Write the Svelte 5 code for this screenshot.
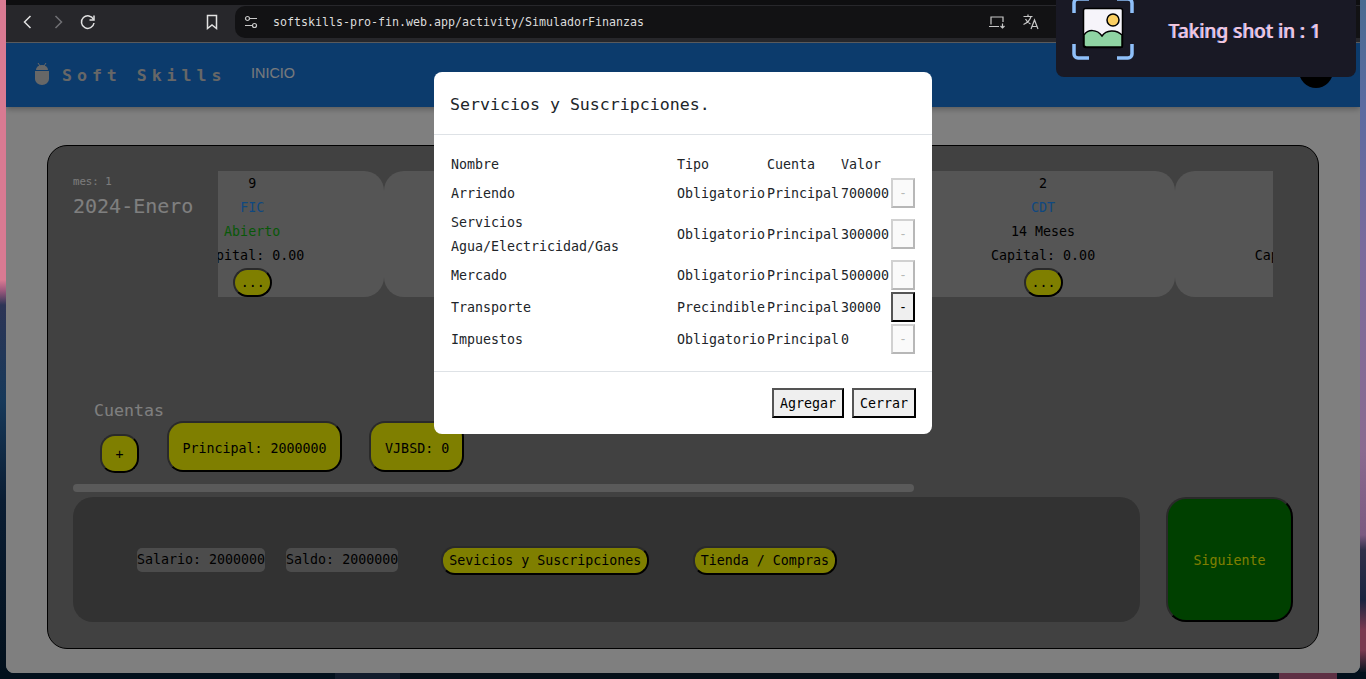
<script>
  // the two middle cards sit behind the dialog, the last one is cut by the strip
  const cards = [
    { num: 9, type: "FIC", term: "Abierto", open: true, capital: "Capital: 0.00" },
    {},
    {},
    { num: 2, type: "CDT", term: "14 Meses", capital: "Capital: 0.00" },
    { capital: "Capital: 0.00" },
  ];

  const services = [
    { name: "Arriendo", kind: "Obligatorio", value: 700000, locked: true },
    { name: "Servicios Agua/Electricidad/Gas", kind: "Obligatorio", value: 300000, locked: true },
    { name: "Mercado", kind: "Obligatorio", value: 500000, locked: true },
    { name: "Transporte", kind: "Precindible", value: 30000, locked: false },
    { name: "Impuestos", kind: "Obligatorio", value: 0, locked: true },
  ];
</script>

<div class="desktop">
  <div class="window">
    <div class="toolbar">
      <svg class="tool" viewBox="0 0 20 20" width="20" height="20"><path d="M12.5 4 6.5 10l6 6" /></svg>
      <svg class="tool off" viewBox="0 0 20 20" width="20" height="20"><path d="M7.5 4l6 6-6 6" /></svg>
      <svg class="tool" viewBox="0 0 20 20" width="20" height="20"><path d="M15.5 7.5A6.3 6.3 0 1 0 16 11" /><path d="M16 3.5v4.5h-4.5" /></svg>
      <svg class="tool mark" viewBox="0 0 20 20" width="20" height="20"><path d="M5.5 3.5h9v13L10 13l-4.500 3.500z" /></svg>
      <div class="address">
        <svg class="tool small" viewBox="0 0 16 16" width="16" height="16">
          <circle cx="4.500" cy="4.500" r="2" /><path d="M7 4.500h7M2 11.500h7" /><circle cx="11.500" cy="11.500" r="2" />
        </svg>
        <span class="url">softskills-pro-fin.web.app/activity/SimuladorFinanzas</span>
        <svg class="tool small laptop" viewBox="0 0 18 16" width="18" height="16">
          <path d="M3 10.500V3h12v5M1 12.500h10M14.500 9.500v4.500M12.500 12l2 2 2-2" />
        </svg>
        <svg class="tool small lang" viewBox="0 0 18 18" width="18" height="18">
          <path d="M1.500 3.500h9M6 1.500v2M9 3.500C8 7 5 10 1.500 11.500M3.500 6c1 2 3 4 5 5M9 16l3.500-9 3.500 9M10 13.500h5" />
        </svg>
      </div>
    </div>

    <div class="page">
      <header class="nav">
        <svg class="bot" viewBox="0 0 14 22" width="14" height="22">
          <path d="M3 0l2 3M11 0L9 3" class="antenna" />
          <path d="M1 7a6 5 0 0 1 12 0z" />
          <path d="M0 8h14v8a7 6 0 0 1-14 0z" />
        </svg>
        <span class="brand">Soft Skills</span>
        <span class="link">INICIO</span>
        <span class="avatar"></span>
      </header>

      <main class="panel">
        <section class="top">
          <div class="date">
            <small>mes: 1</small>
            <h2>2024-Enero</h2>
          </div>
          <div class="strip">
            <div class="track">
              {#each cards as card}
                <div class="card">
                  <span>{card.num ?? ""}</span>
                  <span class="type">{card.type ?? ""}</span>
                  <span class:open={card.open}>{card.term ?? ""}</span>
                  <span>{card.capital ?? ""}</span>
                  <button class="olive more">...</button>
                </div>
              {/each}
            </div>
          </div>
        </section>

        <section class="accounts">
          <h3>Cuentas</h3>
          <div class="account-row">
            <button class="olive add">+</button>
            <button class="olive account">Principal: 2000000</button>
            <button class="olive account">VJBSD: 0</button>
          </div>
          <div class="thumb"></div>
        </section>

        <section class="bottom">
          <div class="summary">
            <span class="chip">Salario: 2000000</span>
            <span class="chip">Saldo: 2000000</span>
            <button class="olive action first">Sevicios y Suscripciones</button>
            <button class="olive action">Tienda / Compras</button>
          </div>
          <button class="next">Siguiente</button>
        </section>
      </main>

      <div class="backdrop"></div>
    </div>
  </div>

  <div class="dialog">
    <h1>Servicios y Suscripciones.</h1>
    <div class="dialog-body">
      <table>
        <colgroup>
          <col class="c-name" /><col class="c-kind" /><col class="c-account" /><col class="c-value" /><col class="c-action" />
        </colgroup>
        <thead>
          <tr><th>Nombre</th><th>Tipo</th><th>Cuenta</th><th>Valor</th><th></th></tr>
        </thead>
        <tbody>
          {#each services as s}
            <tr>
              <td>{s.name}</td>
              <td>{s.kind}</td>
              <td>Principal</td>
              <td>{s.value}</td>
              <td><button class="remove" disabled={s.locked}>-</button></td>
            </tr>
          {/each}
        </tbody>
      </table>
    </div>
    <div class="dialog-foot">
      <button class="plain">Agregar</button>
      <button class="plain">Cerrar</button>
    </div>
  </div>

  <div class="toast">
    <svg viewBox="0 0 62 62" width="62" height="62">
      <g class="corners">
        <path d="M2 15V5a4 4 0 0 1 4-4h11" />
        <path d="M45 1h11a4 4 0 0 1 4 4v10" />
        <path d="M2 46v10a4 4 0 0 0 4 4h11" />
        <path d="M45 60h11a4 4 0 0 0 4-4V46" />
      </g>
      <rect x="11.500" y="10.500" width="39" height="39" rx="2" fill="#f6f4fa" stroke="#000" stroke-width="1.500" />
      <circle cx="41" cy="22" r="6" fill="#fbcf62" stroke="#000" stroke-width="1.500" />
      <path d="M12 48V37c4-6 13-6 18 1 4-6 14-7 20-1v12H14z" fill="#8fd4a3" stroke="#000" stroke-width="1.500" />
    </svg>
    <span>Taking shot in : 1</span>
  </div>
</div>

<style>
  :global(body) {
    margin: 0;
  }

  .desktop {
    position: relative;
    height: 679px;
    overflow: hidden;
    font-family: "DejaVu Sans Mono", monospace;
    font-size: 13.3px;
    background:
      linear-gradient(90deg, #02101c 0 335px, #121c2c 335px 400px, #061019 400px 1279px, #5e3044 1279px 1337px, #02101c 1337px) 0 672px / 100% 7px no-repeat,
      linear-gradient(180deg, #d97a92 0 280px, #a05a7e 290px, #2d3556 305px, #17395a 400px, #0a1d33 500px, #02101c 679px) 0 0 / 6px 100% no-repeat,
      linear-gradient(180deg, #4a6a90 0, #5a6aa0 100px, #7a6a9c 250px, #8a6a90 450px, #7a5a80 535px, #30304a 550px, #1a2440 600px, #7a3a50 630px, #7a3a50 650px, #0a1420 672px) 100% 0 / 6px 100% no-repeat,
      #02101c;
  }

  .window {
    display: flex;
    flex-direction: column;
    height: 672.5px;
    margin: 0 6px;
  }

  .toolbar {
    display: flex;
    flex: none;
    align-items: flex-start;
    height: 36px;
    padding: 6px 0 0 12px;
    background: linear-gradient(#0e0e10 0 5px, #27272b 5px);
    border-bottom: 1px solid #5a5a5c;
  }

  .tool {
    fill: none;
    stroke: #e2e2e2;
    stroke-width: 1.5;
    flex: none;
    margin: 6px 10px 0 0;
  }

  .tool.off {
    stroke: #707074;
  }

  .mark {
    margin-left: 94px;
    margin-right: 13px;
  }

  .address {
    display: flex;
    flex: 1;
    align-items: center;
    height: 32px;
    padding-left: 8px;
    border-radius: 10px 0 0 10px;
    background: #121214;
  }

  .tool.small {
    margin: 0;
    stroke: #c8c8c8;
    stroke-width: 1.2;
  }

  .url {
    margin-left: 14px;
    width: 715px;
    flex: none;
    font-size: 11.63px;
    color: #dcdcdc;
  }

  .tool.small.lang {
    margin-left: 16px;
  }

  .page {
    position: relative;
    flex: 1;
    min-height: 0;
    display: flex;
    flex-direction: column;
    border-radius: 0 0 8px 8px;
    overflow: hidden;
    background: #fff;
  }

  .nav {
    display: flex;
    flex: none;
    align-items: center;
    height: 64px;
    padding-left: 29px;
    background: #1976d8;
    box-shadow: 0 2px 6px rgba(0, 0, 0, 0.3);
  }

  .bot {
    fill: #cfcfcf;
    margin: -2px 13px 0 0;
  }

  .antenna {
    fill: none;
    stroke: #cfcfcf;
  }

  .brand {
    width: 189px;
    font-size: 16.6px;
    font-weight: bold;
    letter-spacing: 4.95px;
    color: #cfcfcf;
  }

  .link {
    margin-top: -4px;
    font-family: "Liberation Sans", sans-serif;
    font-size: 14.4px;
    color: #f0f4f8;
  }

  .avatar {
    width: 34px;
    height: 34px;
    margin: 0 27px 8px auto;
    border-radius: 50%;
    background: #000;
  }

  .panel {
    display: flex;
    flex-direction: column;
    height: 504px;
    margin: 38px 0 0 41px;
    width: 1272px;
    box-sizing: border-box;
    padding: 25px 25px 26px;
    border: 1px solid #000;
    border-radius: 20px;
    background: #838383;
  }

  .top {
    display: flex;
    flex: none;
    height: 126px;
  }

  .date {
    width: 145px;
    flex: none;
    color: #fff;
  }

  .date small {
    display: block;
    margin-top: 4px;
    font-size: 10.7px;
    line-height: 13px;
    opacity: 0.95;
  }

  .date h2 {
    margin: 6px 0 0;
    font-size: 20px;
    font-weight: normal;
    line-height: 24px;
  }

  .strip {
    width: 1055px;
    flex: none;
    overflow: hidden;
  }

  .track {
    display: flex;
    margin-left: -97.7px;
  }

  .card {
    display: flex;
    flex-direction: column;
    flex: none;
    align-items: center;
    box-sizing: border-box;
    width: 263.67px;
    height: 126px;
    padding-top: 1px;
    border-radius: 20px;
    background: #aaa;
    color: #000;
    line-height: 24px;
  }

  .card span {
    height: 24px;
    white-space: nowrap;
  }

  .card .type {
    color: #1e90ff;
  }

  .card .open {
    color: #10b010;
  }

  button {
    font-family: inherit;
    font-size: inherit;
    color: #000;
    box-sizing: border-box;
  }

  .olive {
    border: 2px outset #000;
    background: #ff0;
    padding: 0 6px;
  }

  .more {
    width: 39px;
    height: 29px;
    border-radius: 15px;
  }

  .accounts {
    flex: none;
    margin-top: 102px;
  }

  .accounts h3 {
    margin: 0 0 0 21px;
    font-size: 16.6px;
    font-weight: normal;
    line-height: 24px;
    color: #fff;
  }

  .account-row {
    display: flex;
    align-items: flex-end;
    gap: 27.5px;
    margin: -2px 0 0 27px;
  }

  .add {
    width: 39px;
    height: 39px;
    padding-top: 2px;
    border-radius: 15px;
    margin-bottom: -1px;
  }

  .account {
    height: 51px;
    padding: 3px 13px 0 14px;
    border-radius: 16px;
  }

  .thumb {
    width: 841px;
    height: 8px;
    margin-top: 12px;
    border-radius: 4px;
    background: #b4b4b4;
  }

  .bottom {
    display: flex;
    flex: none;
    gap: 26px;
    margin-top: 5px;
    height: 125px;
  }

  .summary {
    display: flex;
    align-items: center;
    width: 1067px;
    box-sizing: border-box;
    padding-left: 64px;
    border-radius: 20px;
    background: #646464;
  }

  .chip {
    height: 24px;
    margin-right: 21px;
    border-radius: 5px;
    background: #999;
    color: #000;
    line-height: 24px;
  }

  .action {
    height: 29px;
    margin: 2px 43.5px 0 0;
    border-radius: 14px;
    white-space: nowrap;
  }

  .action.first {
    margin-left: 22px;
  }

  .next {
    width: 127px;
    height: 125px;
    padding-top: 2px;
    border: 2px outset #000;
    border-radius: 20px;
    background: #008000;
    color: #ff0;
  }

  .backdrop {
    position: absolute;
    inset: 0;
    background: rgba(0, 0, 0, 0.5);
  }

  .dialog {
    position: absolute;
    top: 72px;
    left: 434px;
    width: 498px;
    height: 362px;
    border-radius: 8px;
    background: #fff;
    color: #212529;
  }

  h1 {
    margin: 0;
    padding: 18px 16px 14px;
    height: 30px;
    font-size: 16.6px;
    font-weight: normal;
    line-height: 30px;
    border-bottom: 1px solid #dee2e6;
  }

  .dialog-body {
    padding: 16px;
    border-bottom: 1px solid #dee2e6;
  }

  table {
    width: 466px;
    table-layout: fixed;
    border-spacing: 0;
    line-height: 24px;
  }

  th {
    font-weight: normal;
    text-align: left;
    padding: 2px 1px 0;
  }

  td {
    padding: 2px 1px 0;
  }

  .c-name {
    width: 226px;
  }

  .c-kind {
    width: 90px;
  }

  .c-account {
    width: 74px;
  }

  .c-value {
    width: 50px;
  }

  .c-action {
    width: 26px;
  }

  .remove {
    display: block;
    width: 24px;
    height: 30px;
    margin-top: -1px;
    margin-bottom: 1px;
    padding: 0;
    border: 2px outset #000;
    background: #efefef;
  }

  .remove:disabled {
    border-color: rgba(118, 118, 118, 0.3);
    background: rgba(239, 239, 239, 0.3);
    color: rgba(16, 16, 16, 0.3);
  }

  .dialog-foot {
    display: flex;
    justify-content: flex-end;
    gap: 8px;
    padding: 16px 16px 0;
  }

  .plain {
    height: 30px;
    padding: 0 6px;
    border: 2px outset #000;
    background: #efefef;
  }

  .toast {
    position: absolute;
    top: -2px;
    left: 1056px;
    display: flex;
    align-items: flex-start;
    width: 300px;
    height: 79px;
    box-sizing: border-box;
    padding-left: 16px;
    border-radius: 0 0 8px 8px;
    background: #191925;
  }

  .corners {
    fill: none;
  }

  .corners path {
    stroke: #8fc0fa;
    stroke-width: 3.5;
  }

  .toast span {
    margin: 21px 0 0 35px;
    font-family: "Noto Sans", sans-serif;
    font-size: 19px;
    font-weight: 500;
    line-height: 24px;
    color: #f5c6dc;
    text-shadow: -1px 0 #89a8fa;
    white-space: nowrap;
  }
</style>
